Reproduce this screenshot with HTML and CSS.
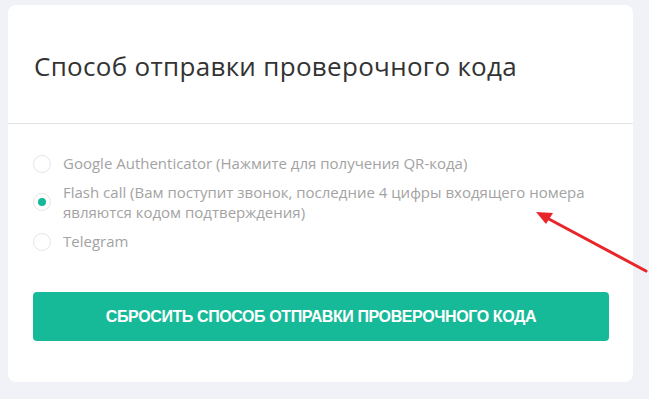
FILE: index.html
```html
<!DOCTYPE html>
<html>
<head>
  <title>Способ отправки проверочного кода</title>
  <meta charset="UTF-8"/>
  <link rel="stylesheet" href="styles.css">
</head>
<body>

  <div class="card">
    <div class="card-head">
      <h2>Способ отправки проверочного кода</h2>
    </div>

    <div class="card-body">
      <label class="radio">
        <input type="radio" name="method">
        <span class="mark"></span>
        <span class="text">Google Authenticator (Нажмите для получения QR-кода)</span>
      </label>
      <label class="radio">
        <input type="radio" name="method" checked>
        <span class="mark"></span>
        <span class="text">Flash call (Вам поступит звонок, последние 4 цифры входящего номера являются кодом подтверждения)</span>
      </label>
      <label class="radio">
        <input type="radio" name="method">
        <span class="mark"></span>
        <span class="text">Telegram</span>
      </label>

      <button class="reset-button">Сбросить способ отправки проверочного кода</button>
    </div>

    <svg class="arrow" width="120" height="70" viewBox="0 0 120 70">
      <line x1="113" y1="62" x2="14" y2="9" stroke="#e8262a" stroke-width="3" stroke-linecap="round"/>
      <polygon points="3,3 20,4 13,15" fill="#e8262a"/>
    </svg>
  </div>

</body>
</html>
```

FILE: styles.css
```css
body {
  margin: 0;
  background-color: #f1f2f7;
  font-family: "Open Sans", "Liberation Sans", sans-serif;
}

.card {
  position: relative;
  width: 625px;
  height: 377px;
  margin: 5px 0 0 8px;
  background-color: #fff;
  border-radius: 8px;
}

.card-head {
  height: 118px;
  padding: 0 26px;
  display: flex;
  align-items: center;
  border-bottom: 1px solid #e3e3e3;
}

.card-head h2 {
  margin: 4px 0 0;
  font-size: 26px;
  font-weight: 400;
  color: #333;
  letter-spacing: 0.3px;
}

.card-body {
  padding: 29px 24px 0 25px;
}

.radio {
  display: flex;
  align-items: flex-start;
  margin-bottom: 9px;
  cursor: pointer;
}

.radio input {
  display: none;
}

.radio .mark {
  flex: none;
  width: 16px;
  height: 16px;
  margin: 2px 12px 0 0;
  border: 1px solid #e6e6e6;
  border-radius: 50%;
  display: flex;
  align-items: center;
  justify-content: center;
}

.radio input:checked + .mark {
  margin-top: 11px;
}

.radio input:checked + .mark::after {
  content: "";
  width: 8px;
  height: 8px;
  border-radius: 50%;
  background-color: #17b897;
}

.radio .text {
  width: 540px;
  font-size: 15px;
  line-height: 20px;
  color: #a3a3a3;
}

.reset-button {
  display: block;
  width: 576px;
  height: 49px;
  margin-top: 41px;
  border: none;
  border-radius: 4px;
  background-color: #17ba98;
  color: #fff;
  font-family: "Liberation Sans", Arial, sans-serif;
  font-size: 16px;
  font-weight: 700;
  letter-spacing: -0.4px;
  text-transform: uppercase;
  cursor: pointer;
}

.arrow {
  position: absolute;
  left: 525px;
  top: 204px;
}
```
